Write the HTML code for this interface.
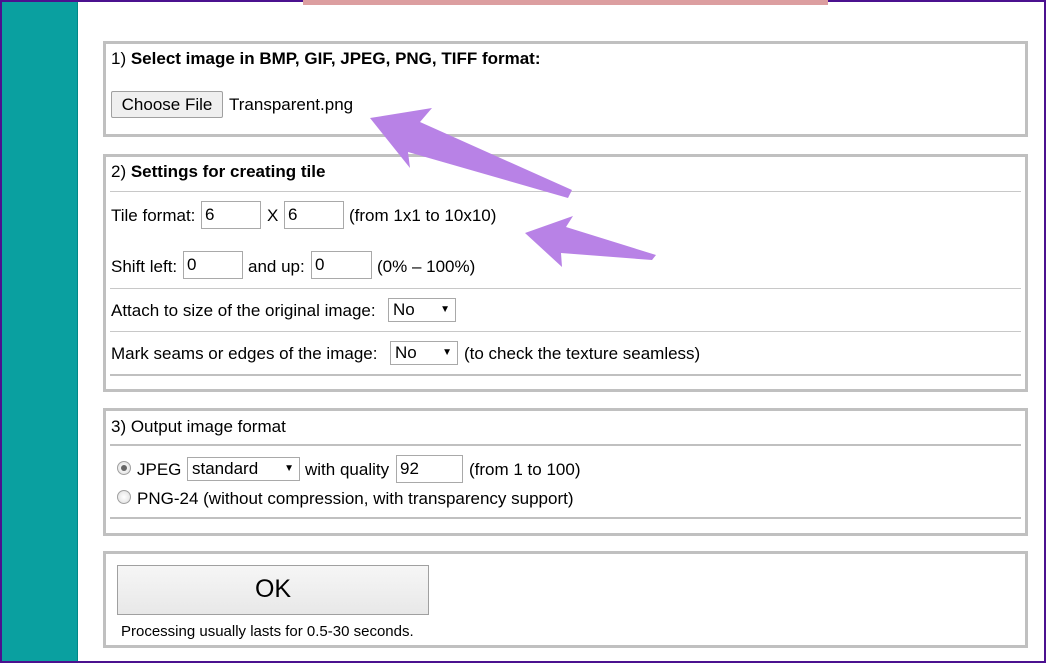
<!DOCTYPE html>
<html><head><meta charset="utf-8"><style>
body{margin:0;width:1046px;height:663px;position:relative;overflow:hidden;background:#fff;font-family:"Liberation Sans",Arial,sans-serif;font-size:17px;color:#000}
.a{position:absolute;white-space:nowrap}
.box{position:absolute;left:103px;width:919px;border:3px solid #c0c0c0;box-sizing:content-box}
.hl{position:absolute;left:110px;width:911px;height:1px;background:#c8c8c8}
.hl2{position:absolute;left:110px;width:911px;height:2px;background:#c0c0c0}
.inp{position:absolute;height:28px;border:1px solid #a9a9a9;box-sizing:border-box;font-size:17px;padding:2px 3px;line-height:22px}
.sel{position:absolute;height:24px;border:1px solid #a9a9a9;box-sizing:border-box;font-size:17px;padding:0 4px;line-height:22px}
.sel:after{content:"▼";position:absolute;right:5px;top:0;font-size:10px}
.rad{position:absolute;width:12px;height:12px;border-radius:50%;border:1px solid #a0a0a0;background:radial-gradient(#fff,#ddd)}
</style></head><body>
<div class="a" style="left:0;top:0;width:1046px;height:663px;box-sizing:border-box;border:2px solid #4b118f"></div>
<div class="a" style="left:2px;top:2px;width:75px;height:659px;background:#0aa0a0"></div>
<div class="a" style="left:77px;top:2px;width:1px;height:659px;background:#088"></div>
<div class="a" style="left:303px;top:0;width:525px;height:5px;background:#dc9ea0"></div>

<div class="box" style="top:41px;height:90px"></div>
<div class="a" style="left:111px;top:49px">1) <b>Select image in BMP, GIF, JPEG, PNG, TIFF format:</b></div>
<div class="a" style="left:111px;top:91px;width:112px;height:27px;border:1px solid #a0a0a0;background:#efefef;box-sizing:border-box;text-align:center;line-height:25px;border-radius:2px">Choose File</div>
<div class="a" style="left:229px;top:95px">Transparent.png</div>

<div class="box" style="top:154px;height:232px"></div>
<div class="a" style="left:111px;top:162px">2) <b>Settings for creating tile</b></div>
<div class="hl" style="top:191px"></div>
<div class="a" style="left:111px;top:206px">Tile format:</div>
<div class="inp" style="left:201px;top:201px;width:60px">6</div>
<div class="a" style="left:267px;top:206px">X</div>
<div class="inp" style="left:284px;top:201px;width:60px">6</div>
<div class="a" style="left:349px;top:206px">(from 1x1 to 10x10)</div>
<div class="a" style="left:111px;top:257px">Shift left:</div>
<div class="inp" style="left:183px;top:251px;width:60px">0</div>
<div class="a" style="left:248px;top:257px">and up:</div>
<div class="inp" style="left:311px;top:251px;width:61px">0</div>
<div class="a" style="left:377px;top:257px">(0% – 100%)</div>
<div class="hl" style="top:288px"></div>
<div class="a" style="left:111px;top:301px">Attach to size of the original image:</div>
<div class="sel" style="left:388px;top:298px;width:68px">No</div>
<div class="hl" style="top:331px"></div>
<div class="a" style="left:111px;top:344px">Mark seams or edges of the image:</div>
<div class="sel" style="left:390px;top:341px;width:68px">No</div>
<div class="a" style="left:464px;top:344px">(to check the texture seamless)</div>
<div class="hl2" style="top:374px"></div>

<div class="box" style="top:408px;height:122px"></div>
<div class="a" style="left:111px;top:417px">3) Output image format</div>
<div class="hl2" style="top:444px"></div>
<div class="rad" style="left:117px;top:461px"><div style="position:absolute;left:3px;top:3px;width:6px;height:6px;border-radius:50%;background:#666"></div></div>
<div class="a" style="left:137px;top:460px">JPEG</div>
<div class="sel" style="left:187px;top:457px;width:113px">standard</div>
<div class="a" style="left:305px;top:460px">with quality</div>
<div class="inp" style="left:396px;top:455px;width:67px">92</div>
<div class="a" style="left:469px;top:460px">(from 1 to 100)</div>
<div class="rad" style="left:117px;top:490px"></div>
<div class="a" style="left:137px;top:489px">PNG-24 (without compression, with transparency support)</div>
<div class="hl2" style="top:517px"></div>

<div class="box" style="top:551px;height:91px"></div>
<div class="a" style="left:117px;top:565px;width:312px;height:50px;border:1px solid #a0a0a0;background:linear-gradient(#f6f6f6,#e8e8e8);box-sizing:border-box;text-align:center;line-height:46px;font-size:25px">OK</div>
<div class="a" style="left:121px;top:623px;font-size:15px">Processing usually lasts for 0.5-30 seconds.</div>

<svg class="a" style="left:0;top:0" width="1046" height="663">
<polygon points="370,118 432,108 420,122 572,190 568,198 408,152 410,168" fill="#b882e6"/>
<polygon points="525,233 573,216 566,227 656,255 652,260 561,253 562,267" fill="#b882e6"/>
</svg>
</body></html>
